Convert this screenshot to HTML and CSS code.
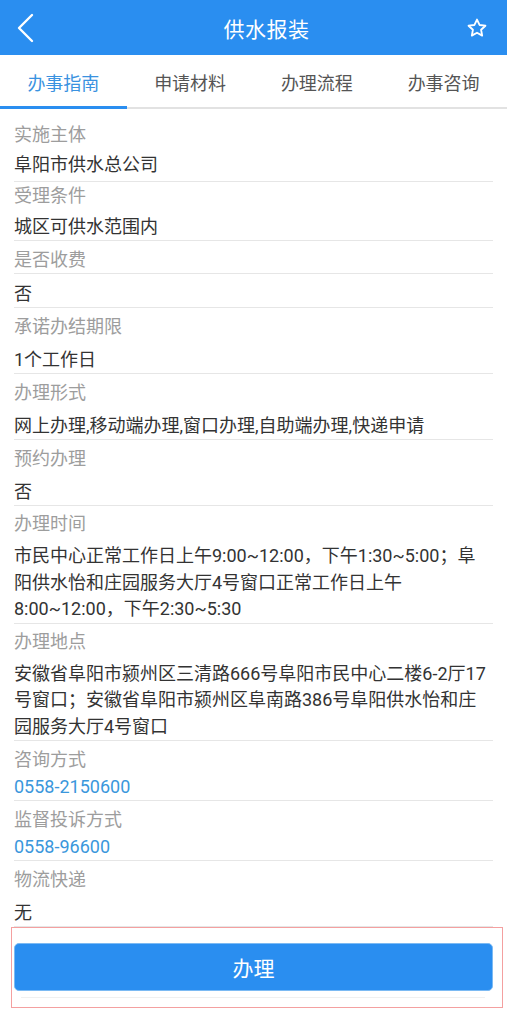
FILE: index.html
```html
<!DOCTYPE html>
<html lang="zh-CN">
<head>
<meta charset="utf-8">
<title>供水报装</title>
<link rel="stylesheet" href="styles.css">
</head>
<body>
<div class="page">
  <header class="topbar">
    <div class="back">
      <svg width="20" height="30" viewBox="0 0 20 30"><polyline points="15,2 2,15 15,28" fill="none" stroke="#fff" stroke-width="2.4" stroke-linecap="round" stroke-linejoin="round"/></svg>
    </div>
    <div class="title">供水报装</div>
    <div class="fav">
      <svg width="22" height="22" viewBox="0 0 24 24"><path d="M12 2.8l2.75 5.9 6.45.8-4.75 4.45 1.2 6.4L12 17.2l-5.65 3.15 1.2-6.4L2.8 9.5l6.45-.8z" fill="none" stroke="#fff" stroke-width="2" stroke-linejoin="round"/></svg>
    </div>
  </header>
  <nav class="tabs">
    <div class="tab tab--active">办事指南</div>
    <div class="tab">申请材料</div>
    <div class="tab">办理流程</div>
    <div class="tab">办事咨询</div>
  </nav>
  <main class="content">
    <div class="item item--first">
      <div class="label">实施主体</div>
      <div class="value">阜阳市供水总公司</div>
    </div>
    <div class="item item--tight">
      <div class="label">受理条件</div>
      <div class="value">城区可供水范围内</div>
    </div>
    <div class="item item--split">
      <div class="label">是否收费</div>
      <div class="value">否</div>
    </div>
    <div class="item">
      <div class="label">承诺办结期限</div>
      <div class="value">1个工作日</div>
    </div>
    <div class="item">
      <div class="label">办理形式</div>
      <div class="value">网上办理,移动端办理,窗口办理,自助端办理,快递申请</div>
    </div>
    <div class="item">
      <div class="label">预约办理</div>
      <div class="value">否</div>
    </div>
    <div class="item item--multi">
      <div class="label">办理时间</div>
      <div class="value">市民中心正常工作日上午9:00~12:00，下午1:30~5:00；阜阳供水怡和庄园服务大厅4号窗口正常工作日上午8:00~12:00，下午2:30~5:30</div>
    </div>
    <div class="item item--multi">
      <div class="label">办理地点</div>
      <div class="value">安徽省阜阳市颍州区三清路666号阜阳市民中心二楼6-2厅17号窗口；安徽省阜阳市颍州区阜南路386号阜阳供水怡和庄园服务大厅4号窗口</div>
    </div>
    <div class="item item--phone">
      <div class="label">咨询方式</div>
      <div class="value value--link">0558-2150600</div>
    </div>
    <div class="item item--phone">
      <div class="label">监督投诉方式</div>
      <div class="value value--link">0558-96600</div>
    </div>
    <div class="item">
      <div class="label">物流快递</div>
      <div class="value">无</div>
    </div>
    <div class="item item--last">
      <div class="label">备注说明</div>
    </div>
  </main>
  <footer class="footer">
    <button class="btn">办理</button>
    <div class="footer-line"></div>
  </footer>
  <div class="highlight"></div>
</div>
</body>
</html>
```
FILE: styles.css
```css
* { box-sizing: border-box; }
html, body { margin: 0; padding: 0; background: #fff; }
body {
  font-family: Roboto, "Noto Sans CJK SC", sans-serif;
  font-size: 18px;
  color: #333;
}
.page {
  position: relative;
  width: 507px;
  height: 1015px;
  display: flex;
  flex-direction: column;
  overflow: hidden;
}
.topbar {
  height: 55px;
  flex: 0 0 55px;
  background: #2a8ef0;
  display: flex;
  align-items: center;
  color: #fff;
}
.back {
  width: 56px;
  padding-left: 17px;
  display: flex;
  align-items: center;
}
.title {
  flex: 1;
  text-align: center;
  font-size: 21px;
  padding-left: 26px;
  letter-spacing: 0.5px;
}
.fav {
  width: 56px;
  display: flex;
  align-items: center;
  padding-left: 15px;
}
.tabs {
  flex: 0 0 54px;
  display: flex;
  border-bottom: 2px solid #e2e2e2;
  position: relative;
}
.tab {
  flex: 1;
  display: flex;
  align-items: center;
  justify-content: center;
  font-size: 18px;
  color: #555;
  padding-top: 2px;
}
.tab--active {
  color: #3a92e0;
  position: relative;
}
.tab--active::after {
  content: "";
  position: absolute;
  left: 0;
  right: 0;
  bottom: -2px;
  height: 3px;
  background: #2a8ef0;
}
.content {
  flex: 1;
  overflow: hidden;
}
.item {
  margin: 0 14px;
  padding-top: 5px;
  border-bottom: 1px solid #e6e6e6;
}
.label {
  line-height: 27px;
  color: #9d9d9d;
}
.value {
  line-height: 27px;
  margin-top: 6px;
  color: #333;
}
.value--link { color: #3a97dc; }
.item--first { padding-top: 12px; padding-bottom: 3px; }
.item--first .value { margin-top: 3px; }
.item--tight { padding-top: 0; }
.item--tight .value { margin-top: 4px; }
.item--split .label { border-bottom: 1px solid #e6e6e6; }
.item--multi { padding-top: 4px; }
.item--multi .value { line-height: 26.5px; }
.item--phone { padding-top: 5px; }
.item--phone .value { margin-top: 0; }
.item--last { border-bottom: 0; padding-top: 7px; }
.footer {
  flex: 0 0 77px;
  background: #fff;
  padding: 5px 14px 0;
}
.btn {
  display: block;
  width: 100%;
  height: 48px;
  border: 1px solid #7cbaf3;
  border-radius: 5px;
  background: #2a8ef0;
  color: #fff;
  font-family: Roboto, "Noto Sans CJK SC", sans-serif;
  font-size: 21px;
  padding: 0;
}
.footer-line {
  margin: 6px 8px 0 7px;
  height: 1px;
  background: #f0f0f0;
}
.highlight {
  position: absolute;
  left: 11px;
  top: 927px;
  width: 492px;
  height: 81px;
  border: 1px solid #f4a0a0;
  pointer-events: none;
}
```
